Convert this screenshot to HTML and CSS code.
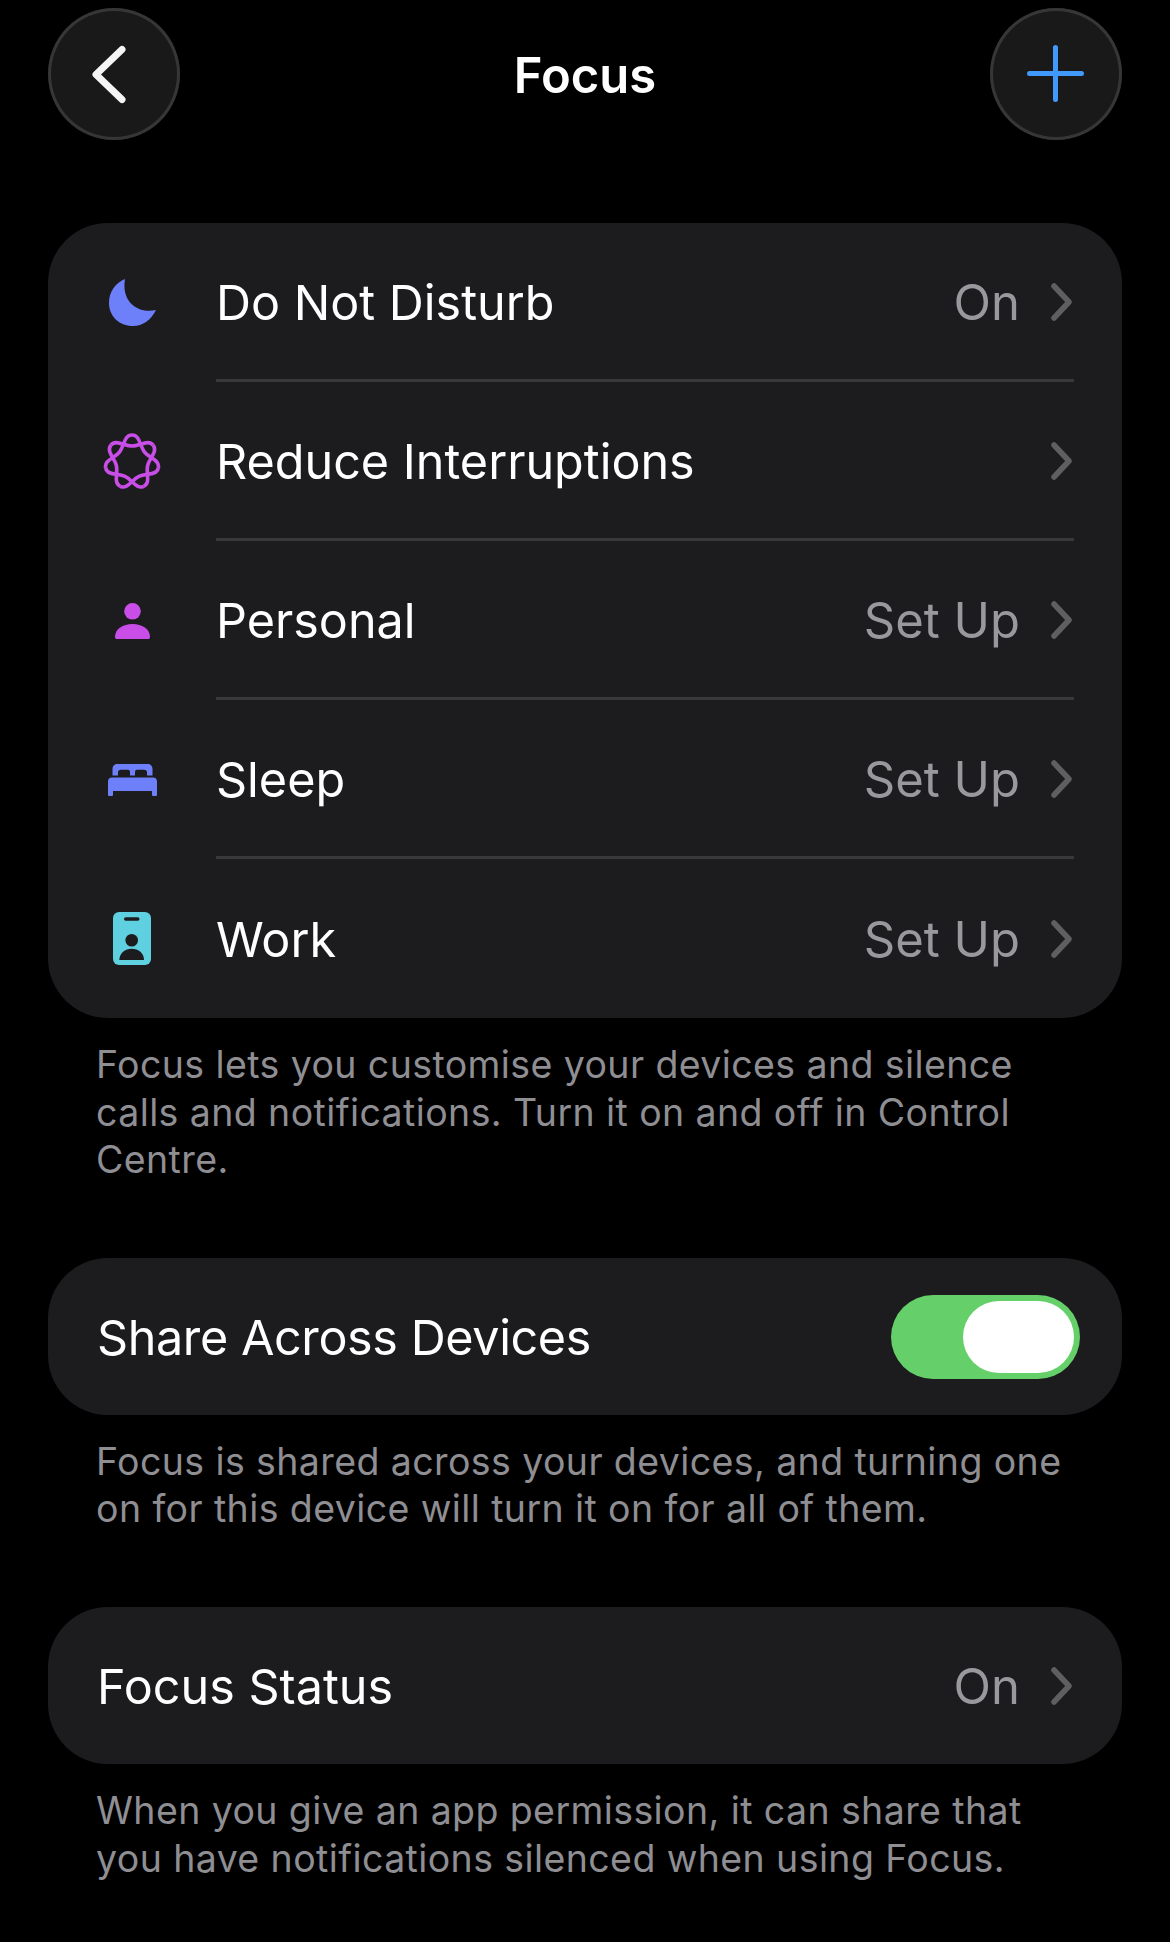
FILE: index.html
```html
<!DOCTYPE html>
<html lang="en">
<head>
    <meta charset="UTF-8">
    <meta name="viewport" content="width=device-width, initial-scale=1.0">
    <title>Focus</title>
    <link rel="stylesheet" href="styles.css">
</head>
<body>
    <div class="page">
        <div class="topbar">
            <div class="round-btn">
                <svg width="132" height="132" viewBox="0 0 132 132"><path d="M74 41.500 L48 66.500 L74 91.500" class="back-ico"/></svg>
            </div>
            <h1 class="title">Focus</h1>
            <div class="round-btn">
                <svg width="132" height="132" viewBox="0 0 132 132"><path d="M65.500 39.500 V91.500 M39.500 65.500 H91.500" class="plus-ico"/></svg>
            </div>
        </div>

        <div class="card">
            <div class="row">
                <div class="icon">
                    <svg width="47" height="47" viewBox="0 0 47 47"><path d="M16 0 C6 4 0 13 0 24 C0 37 10 47 24 47 C34 47 42 41 47 31 C30 35 12 24 16 0 Z" fill="#6e7ffa"/></svg>
                </div>
                <div class="row-body">
                    <span class="label">Do Not Disturb</span>
                    <span class="value">On</span>
                    <svg class="chev" width="21" height="38" viewBox="0 0 21 38"><path d="M3 3 L18 19 L3 35"/></svg>
                </div>
            </div>
            <div class="row">
                <div class="icon">
                    <svg width="58" height="58" viewBox="-29 -29 58 58" class="flower">
                        <defs><path id="lobe" d="M0 -27 C8 -27 7.520 -16.240 12.510 -9.980 C17.500 -3.720 28.100 -1.790 26.320 6.010"/></defs>
                        <use href="#lobe"/>
                        <use href="#lobe" transform="rotate(51.43)"/>
                        <use href="#lobe" transform="rotate(102.86)"/>
                        <use href="#lobe" transform="rotate(154.29)"/>
                        <use href="#lobe" transform="rotate(205.71)"/>
                        <use href="#lobe" transform="rotate(257.14)"/>
                        <use href="#lobe" transform="rotate(308.57)"/>
                    </svg>
                </div>
                <div class="row-body">
                    <span class="label">Reduce Interruptions</span>
                    <svg class="chev" width="21" height="38" viewBox="0 0 21 38"><path d="M3 3 L18 19 L3 35"/></svg>
                </div>
            </div>
            <div class="row">
                <div class="icon">
                    <svg width="35" height="36" viewBox="0 0 35 36" fill="#c94ee8"><circle cx="17.500" cy="8.300" r="8.300"/><path d="M0 34 C0 26 8 21 17.500 21 C27 21 35 26 35 34 C35 35.500 34 36 33 36 H2 C1 36 0 35.500 0 34 Z"/></svg>
                </div>
                <div class="row-body">
                    <span class="label">Personal</span>
                    <span class="value">Set Up</span>
                    <svg class="chev" width="21" height="38" viewBox="0 0 21 38"><path d="M3 3 L18 19 L3 35"/></svg>
                </div>
            </div>
            <div class="row">
                <div class="icon">
                    <svg width="49" height="32" viewBox="0 0 49 32" fill="#6e7ffa"><path d="M4.500 11.500 V5 C4.500 2 6.500 0 9.500 0 H39.500 C42.500 0 44.500 2 44.500 5 V11.500 H39 V8.500 C39 6.800 38 5.800 36 5.800 H29 C27.500 5.800 27 6.800 27 8.500 V11.500 H22 V8.500 C22 6.800 21.500 5.800 20 5.800 H13 C11 5.800 10 6.800 10 8.500 V11.500 Z"/><path d="M4 13.500 H45 C47.500 13.500 49 15 49 17.500 V30.500 C49 31.500 48.500 32 47.500 32 H45.500 C44.500 32 44 31.500 44 30.500 V27 H5 V30.500 C5 31.500 4.500 32 3.500 32 H1.500 C0.500 32 0 31.500 0 30.500 V17.500 C0 15 1.500 13.500 4 13.500 Z"/></svg>
                </div>
                <div class="row-body">
                    <span class="label">Sleep</span>
                    <span class="value">Set Up</span>
                    <svg class="chev" width="21" height="38" viewBox="0 0 21 38"><path d="M3 3 L18 19 L3 35"/></svg>
                </div>
            </div>
            <div class="row">
                <div class="icon">
                    <svg width="38" height="53" viewBox="0 0 38 53"><rect width="38" height="53" rx="6" fill="#5fd0e0"/><rect x="11" y="5.300" width="15.500" height="3.400" rx="1.700" fill="#1c1c1e"/><circle cx="18.700" cy="28.300" r="6.300" fill="#1c1c1e"/><path d="M6.300 48 C6.500 41 12 36.700 18.700 36.700 C25.500 36.700 31 41 31 48 Z" fill="#1c1c1e"/></svg>
                </div>
                <div class="row-body">
                    <span class="label">Work</span>
                    <span class="value">Set Up</span>
                    <svg class="chev" width="21" height="38" viewBox="0 0 21 38"><path d="M3 3 L18 19 L3 35"/></svg>
                </div>
            </div>
        </div>
        <p class="note">Focus lets you customise your devices and silence calls and notifications. Turn it on and off in Control Centre.</p>

        <div class="card single">
            <span class="label tight">Share Across Devices</span>
            <div class="toggle"><div class="thumb"></div></div>
        </div>
        <p class="note">Focus is shared across your devices, and turning one on for this device will turn it on for all of them.</p>

        <div class="card single status">
            <span class="label">Focus Status</span>
            <span class="value">On</span>
            <svg class="chev" width="21" height="38" viewBox="0 0 21 38"><path d="M3 3 L18 19 L3 35"/></svg>
        </div>
        <p class="note">When you give an app permission, it can share that you have notifications silenced when using Focus.</p>
    </div>
</body>
</html>
```

FILE: styles.css
```css
*{
    margin: 0;
    padding: 0;
    box-sizing: border-box;
}
html,body{
    background: #000;
}
body{
    font-family: "Inter", "Liberation Sans", sans-serif;
    color: #fff;
}
.page{
    width: 1170px;
    height: 1942px;
    padding: 8px 48px 0;
    overflow: hidden;
}
.topbar{
    display: flex;
    align-items: center;
    justify-content: space-between;
    height: 132px;
    margin-bottom: 83px;
}
.round-btn{
    width: 132px;
    height: 132px;
    border-radius: 50%;
    background: #191919;
    box-shadow: inset 0 0 0 3px #363636;
}
.round-btn svg{
    display: block;
}
.back-ico{
    fill: none;
    stroke: #f5f5f5;
    stroke-width: 7;
    stroke-linecap: round;
    stroke-linejoin: round;
}
.plus-ico{
    fill: none;
    stroke: #4199fb;
    stroke-width: 5;
    stroke-linecap: round;
}
.title{
    padding-top: 2px;
    font-size: 49px;
    font-weight: 600;
}
.card{
    background: #1c1c1e;
    border-radius: 60px;
}
.row{
    display: flex;
    align-items: stretch;
    height: 159px;
}
.icon{
    width: 168px;
    flex-shrink: 0;
    display: flex;
    align-items: center;
    justify-content: center;
}
.row-body{
    flex: 1;
    display: flex;
    align-items: center;
    margin-right: 48px;
    border-bottom: 3px solid #38383a;
}
.row:last-child .row-body{
    border-bottom: none;
}
.label{
    flex: 1;
    padding-top: 2px;
    font-size: 48.500px;
}
.tight{
    letter-spacing: -0.4px;
}
.value{
    padding-top: 2px;
    font-size: 49px;
    color: #98989d;
    margin-right: 31px;
}
.chev{
    flex-shrink: 0;
    margin: 1px 2px 0 0;
}
.chev path{
    fill: none;
    stroke: #5f5f61;
    stroke-width: 5.500;
    stroke-linecap: round;
    stroke-linejoin: round;
}
.flower path{
    fill: none;
    stroke: #c94ee8;
    stroke-width: 3.600;
}
.note{
    padding: 23px 48px 74px;
    font-size: 37.500px;
    line-height: 47.600px;
    color: #8e8e93;
    letter-spacing: 0.4px;
}
.single{
    display: flex;
    align-items: center;
    height: 157px;
    padding: 0 42px 0 49px;
}
.status{
    padding-right: 48px;
}
.toggle{
    width: 189px;
    height: 84px;
    margin-top: 2px;
    border-radius: 42px;
    background: #65d06a;
    padding: 6px;
    display: flex;
    justify-content: flex-end;
}
.thumb{
    width: 111px;
    height: 72px;
    border-radius: 36px;
    background: #fff;
}
```
